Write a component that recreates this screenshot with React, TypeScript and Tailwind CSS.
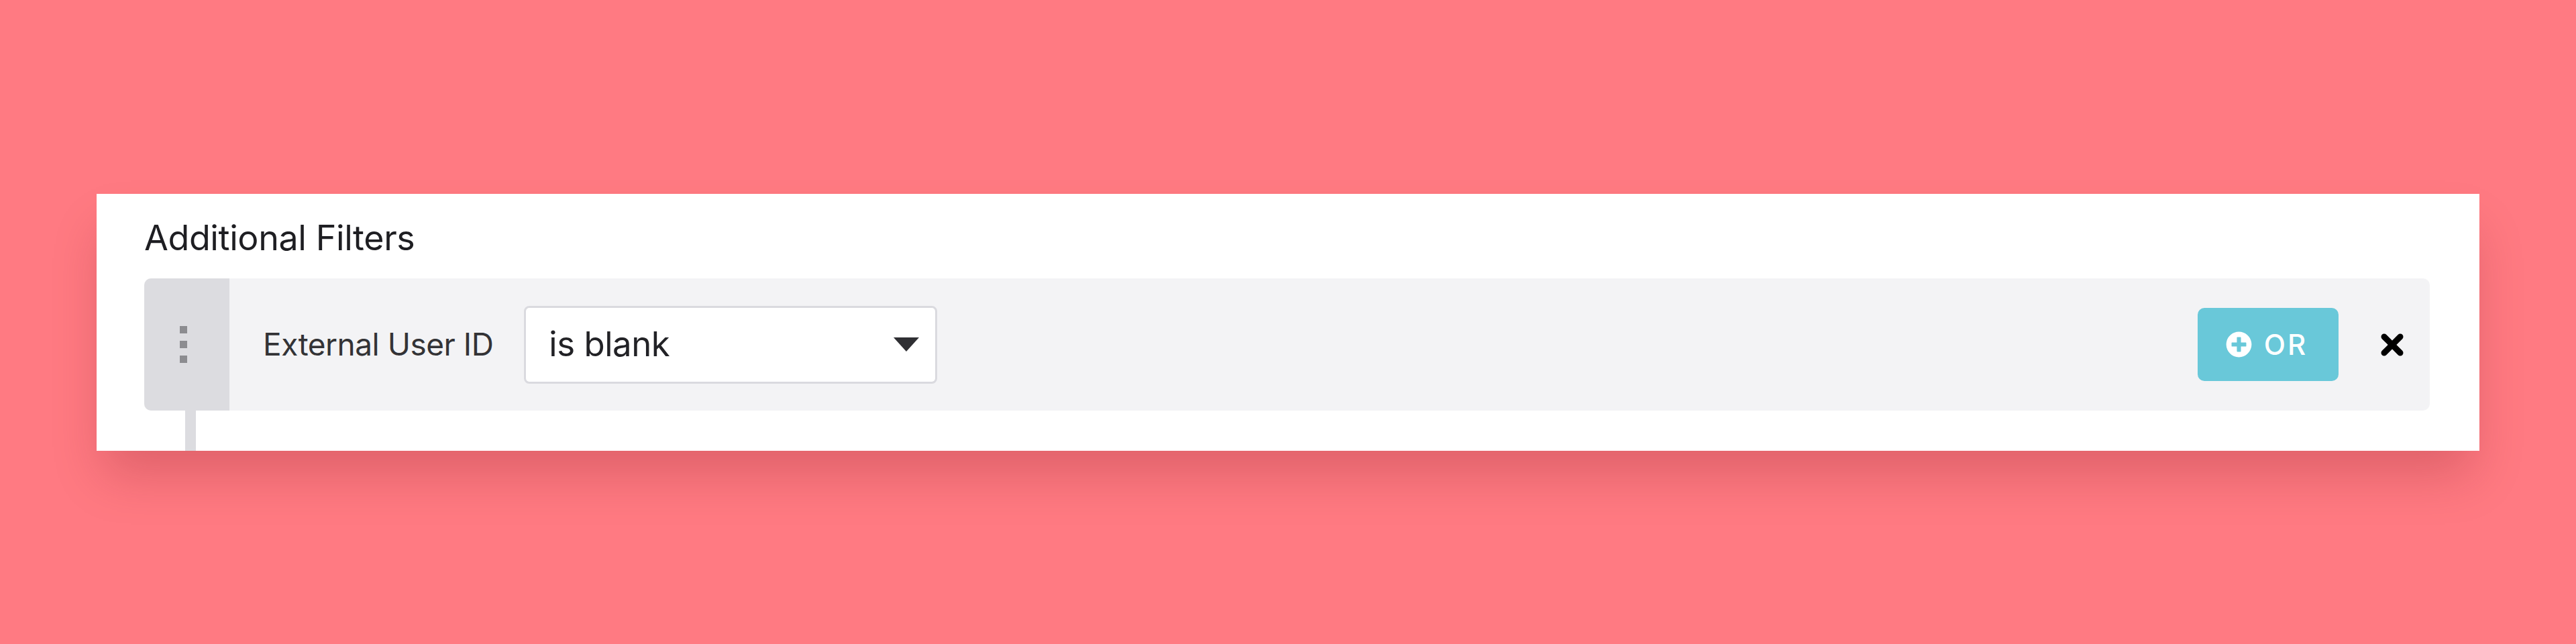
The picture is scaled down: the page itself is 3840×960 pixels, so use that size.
import { FaPlusCircle } from "react-icons/fa";

const font = { fontFamily: "Inter, Lato, 'Open Sans', sans-serif" };

function DragHandle() {
  return (
    <div className="flex h-full w-[127px] shrink-0 flex-col items-center justify-center gap-[11px] rounded-l-[10px] bg-[#dcdce0] pr-[10px]">
      <span className="block h-[11px] w-[11px] bg-[#8c8c90]" />
      <span className="block h-[11px] w-[11px] bg-[#8c8c90]" />
      <span className="block h-[11px] w-[11px] bg-[#8c8c90]" />
    </div>
  );
}

export default function App() {
  return (
    <div className="h-[960px] w-full overflow-hidden bg-[#ff7a82] pt-[289px]" style={font}>
      {/* Card */}
      <div className="ml-[144px] flex h-[383px] w-[3552px] flex-col bg-white pl-[71px] pr-[74px] pt-[36px] shadow-[0_45px_70px_-10px_rgba(120,20,30,0.24)]">
        <h2 className="text-[52px] leading-[60px] font-normal text-[#1e1e22] tracking-[-0.4px]">
          Additional Filters
        </h2>

        {/* Filter row */}
        <div className="mt-[30px] flex h-[197px] items-center rounded-[10px] bg-[#f3f3f5]">
          <DragHandle />

          <span className="ml-[50px] text-[46px] text-[#333336] tracking-[-0.5px]">External User ID</span>

          <button className="ml-[46px] flex h-[116px] w-[616px] items-center justify-between rounded-[8px] border-[3px] border-[#dadadf] bg-white pl-[34px] pr-[24px]">
            <span className="text-[51px] text-[#222226] tracking-[-0.5px]">is blank</span>
            <svg width="38" height="21" viewBox="0 0 38 21">
              <polygon points="0,0 38,0 19,21" fill="#2f2f33" />
            </svg>
          </button>

          <div className="ml-auto flex items-center">
            <button className="flex h-[109px] w-[210px] items-center justify-center gap-[18px] rounded-[10px] bg-[#69c8d9] pr-[4px] text-white">
              <FaPlusCircle className="h-[39px] w-[39px]" />
              <span className="text-[42px] font-medium tracking-[3px]">OR</span>
            </button>
            <button className="ml-[62px] mr-[38px] flex items-center justify-center">
              <svg width="36" height="36" viewBox="0 0 36 36">
                <path d="M6 6 L30 30 M30 6 L6 30" stroke="#000" strokeWidth="9" strokeLinecap="round" />
              </svg>
            </button>
          </div>
        </div>

        {/* Connector line */}
        <div className="ml-[61px] w-[16px] flex-1 bg-[#dcdce0]" />
      </div>
    </div>
  );
}
